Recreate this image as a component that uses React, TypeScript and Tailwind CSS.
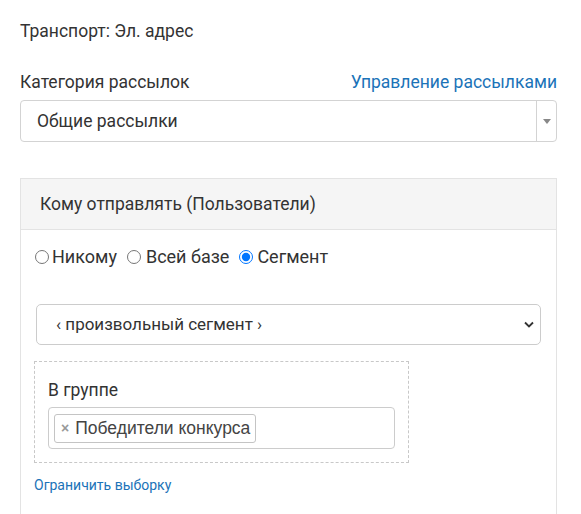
import React from "react";

export default function App() {
  return (
    <div
      className="w-[581px] h-[514px] overflow-hidden bg-white text-[#333] pl-5 pr-6 pt-[20px]"
      style={{ fontFamily: "Roboto, 'Noto Sans', sans-serif" }}
    >
      <div className="text-[17.5px] leading-[22px] h-[22px]">Транспорт: Эл. адрес</div>

      <div className="mt-[29px] flex items-center justify-between text-[17.5px] leading-[22px]">
        <span>Категория рассылок</span>
        <a className="text-[#1b73b8]">Управление рассылками</a>
      </div>

      <div className="mt-[7px] h-[42px] border border-[#d3d3d3] rounded-[4px] flex items-stretch">
        <div className="flex-1 flex items-center pl-[16px] text-[17.5px]">Общие рассылки</div>
        <div className="w-[20px] border-l border-[#d3d3d3] flex items-center justify-center">
          <svg width="8" height="5" viewBox="0 0 8 5">
            <path d="M0 0 L8 0 L4 5 Z" fill="#888" />
          </svg>
        </div>
      </div>

      <div className="mt-[36px] border border-[#e3e3e3] border-b-[#e3e3e3]">
        <div className="h-[51px] bg-[#f5f5f5] border-b border-[#e3e3e3] flex items-center pl-[19px] text-[17.5px]">
          Кому отправлять (Пользователи)
        </div>
        <div className="pl-[13px] pr-[15px] pt-[16px] pb-[22px]">
          <div className="flex items-center text-[18px] leading-[22px] h-[22px]">
            <label className="flex items-center">
              <input type="radio" name="r" className="w-[14px] h-[14px] mr-[3px] ml-[1px]" />
              <span>Никому</span>
            </label>
            <label className="flex items-center ml-[10px]">
              <input type="radio" name="r" className="w-[14px] h-[14px] mr-[5px]" />
              <span>Всей базе</span>
            </label>
            <label className="flex items-center ml-[10px]">
              <input type="radio" name="r" defaultChecked className="w-[14px] h-[14px] mr-[4px]" />
              <span>Сегмент</span>
            </label>
          </div>

          <div className="mt-[36px] ml-[2px] h-[41px] border border-[#ccc] rounded-[5px] flex items-center justify-between pl-[19px] pr-[6px] text-[17px]">
            <span>‹ произвольный сегмент ›</span>
            <svg width="10" height="7" viewBox="0 0 10 7">
              <path d="M1 1.5 L5 5.5 L9 1.5" fill="none" stroke="#333" strokeWidth="1.8" />
            </svg>
          </div>

          <div className="mt-[16px] w-[375px] border border-dashed border-[#c8c8c8] pl-[13px] pr-[13px] pt-[17px] pb-[13px]">
            <div className="text-[17.5px] leading-[22px]">В группе</div>
            <div className="mt-[6px] h-[42px] border border-[#ccc] rounded-[4px] flex items-center pl-[5px]">
              <div
                className="h-[29px] border border-[#c4c4c4] rounded-[3px] flex items-center pl-[6px] pr-[5px] text-[17.5px] text-[#444]"
                style={{ fontFamily: "'Liberation Sans', Arial, sans-serif" }}
              >
                <span className="text-[#999] text-[14px] font-bold mr-[6px]">×</span>
                <span>Победители конкурса</span>
              </div>
            </div>
          </div>

          <div className="mt-[13px] text-[14px] leading-[18px] text-[#1b73b8]">Ограничить выборку</div>
        </div>
      </div>
    </div>
  );
}
